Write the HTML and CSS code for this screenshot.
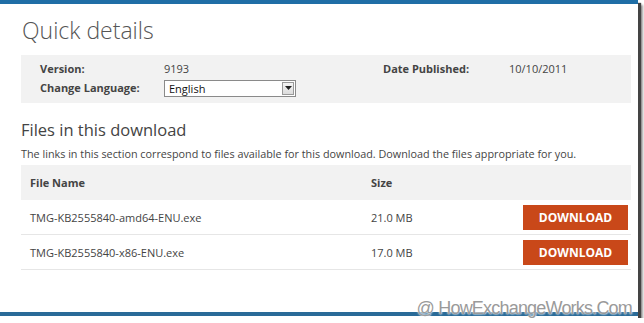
FILE: index.html
```html
<!DOCTYPE html>
<html lang="en">
<head>
  <meta charset="UTF-8">
  <title>Quick details</title>
  <link rel="stylesheet" href="styles.css">
</head>
<body>
  <div class="frame">
    <div class="page">
      <h1 class="title">Quick details</h1>

      <div class="details">
        <div class="detail-row">
          <span class="label">Version:</span>
          <span class="value">9193</span>
          <span class="label label-date">Date Published:</span>
          <span class="value">10/10/2011</span>
        </div>
        <div class="detail-row">
          <span class="label">Change Language:</span>
          <div class="select">
            <span class="select-text">English</span>
            <span class="select-btn">
              <svg width="7" height="4" viewBox="0 0 7 4"><path d="M0 0h7L3.5 4z" fill="#222"/></svg>
            </span>
          </div>
        </div>
      </div>

      <h2 class="subtitle">Files in this download</h2>
      <p class="intro">The links in this section correspond to files available for this download. Download the files appropriate for you.</p>

      <div class="files">
        <div class="file-row file-head">
          <span class="col-name">File Name</span>
          <span class="col-size">Size</span>
        </div>
        <div class="file-row">
          <span class="col-name">TMG-KB2555840-amd64-ENU.exe</span>
          <span class="col-size">21.0 MB</span>
          <a class="download-btn" href="#">DOWNLOAD</a>
        </div>
        <div class="file-row">
          <span class="col-name">TMG-KB2555840-x86-ENU.exe</span>
          <span class="col-size">17.0 MB</span>
          <a class="download-btn" href="#">DOWNLOAD</a>
        </div>
      </div>
    </div>
    <div class="footer-bar">
      <span class="watermark">@ HowExchangeWorks.Com</span>
    </div>
  </div>
</body>
</html>
```

FILE: styles.css
```css
/* General */
html,
body {
    overflow: hidden;
}

body {
    margin: 0;
    background: #fff;
    font-family: 'Open Sans', 'Noto Sans', sans-serif;
    color: #333;
}

.frame {
    width: 638px;
    height: 318px;
    border-top: 4px solid #1f6ea6;
    box-shadow: 3px 3px 1px #444, 5px 5px 2px #a0a0a0;
    display: flex;
    flex-direction: column;
    box-sizing: border-box;
    background: #fff;
}

.page {
    flex: 1;
    padding: 0 7px 0 21px;
}

/* Quick details */
.title {
    margin: 10px 0 0 1px;
    font-size: 23px;
    font-weight: 300;
    color: #555;
    line-height: 32px;
}

.details {
    margin-top: 9px;
    background: #f2f2f2;
    padding: 4px 0 7px 19px;
    font-size: 11px;
}

.detail-row {
    display: flex;
    align-items: center;
    height: 18px;
}

.detail-row + .detail-row {
    margin-top: 1px;
}

.label {
    width: 124px;
    flex-shrink: 0;
    font-weight: bold;
    color: #444;
}

.label-date {
    width: 126px;
    margin-left: 95px;
}

.value {
    width: 124px;
    flex-shrink: 0;
    color: #444;
}

.select {
    display: flex;
    width: 132px;
    height: 17px;
    margin-top: 2px;
    border: 1px solid #8a8a8a;
    background: #fff;
    box-sizing: border-box;
}

.select-text {
    flex: 1;
    padding-left: 4px;
    font-size: 11px;
    line-height: 15px;
    color: #111;
}

.select-btn {
    width: 12px;
    margin: 1px;
    border: 1px solid #999;
    background: linear-gradient(#f4f4f4, #dcdcdc);
    display: flex;
    align-items: center;
    justify-content: center;
    box-sizing: border-box;
}

/* Files */
.subtitle {
    margin: 16px 0 0;
    font-size: 16.5px;
    font-weight: normal;
    color: #444;
    line-height: 22px;
}

.intro {
    margin: 5px 0 0;
    font-size: 10.8px;
    line-height: 15px;
    color: #444;
    white-space: nowrap;
}

.files {
    margin-top: 4px;
    font-size: 11px;
    color: #444;
}

.file-row {
    display: flex;
    align-items: center;
    height: 34px;
    padding-left: 9px;
    border-bottom: 1px solid #e6e6e6;
}

.file-head {
    height: 35px;
    background: #f2f2f2;
    border-bottom: none;
    font-weight: bold;
}

.col-name {
    width: 341px;
}

.col-size {
    flex: 1;
}

.download-btn {
    width: 105px;
    height: 25px;
    margin-right: 3px;
    background: #c94819;
    color: #fff;
    font-weight: bold;
    font-size: 12px;
    text-decoration: none;
    display: flex;
    align-items: center;
    justify-content: center;
}

/* Footer */
.footer-bar {
    height: 4px;
    margin-bottom: 2px;
    background: #2a6b98;
    position: relative;
}

.watermark {
    position: absolute;
    right: 6px;
    bottom: -3px;
    font-family: 'Liberation Sans', sans-serif;
    font-size: 18px;
    letter-spacing: -0.8px;
    line-height: 22px;
    color: #9a9a9a;
    text-shadow: 0 0 2px #fff, 0 0 2px #fff;
}
```
